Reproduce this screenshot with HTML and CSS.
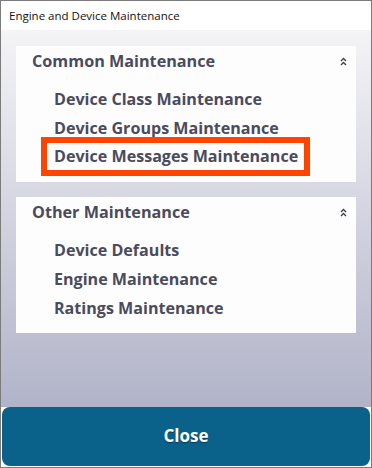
FILE: index.html
```html
<!DOCTYPE html>
<html>
<head>
<meta charset="utf-8">
<link rel="stylesheet" href="styles.css">
</head>
<body>
<div class="window">
  <div class="titlebar">Engine and Device Maintenance</div>
  <div class="content">
    <section class="card">
      <div class="card-head">
        <span class="card-title">Common Maintenance</span>
        <svg class="chev" width="7" height="9" viewBox="0 0 7 9"><polyline points="1,4 3.5,1.5 6,4" fill="none" stroke="#3c3c46" stroke-width="1.3"/><polyline points="1,8 3.5,5.5 6,8" fill="none" stroke="#3c3c46" stroke-width="1.3"/></svg>
      </div>
      <ul class="items">
        <li class="item">Device Class Maintenance</li>
        <li class="item">Device Groups Maintenance</li>
        <li class="item"><span class="hl">Device Messages Maintenance</span></li>
      </ul>
    </section>
    <section class="card">
      <div class="card-head">
        <span class="card-title">Other Maintenance</span>
        <svg class="chev" width="7" height="9" viewBox="0 0 7 9"><polyline points="1,4 3.5,1.5 6,4" fill="none" stroke="#3c3c46" stroke-width="1.3"/><polyline points="1,8 3.5,5.5 6,8" fill="none" stroke="#3c3c46" stroke-width="1.3"/></svg>
      </div>
      <ul class="items">
        <li class="item">Device Defaults</li>
        <li class="item">Engine Maintenance</li>
        <li class="item">Ratings Maintenance</li>
      </ul>
    </section>
  </div>
  <button class="close">Close</button>
</div>
</body>
</html>
```
FILE: styles.css
```css
* { box-sizing: border-box; }
html, body { margin: 0; padding: 0; }
body { width: 372px; height: 468px; background: #ffffff; font-family: "Open Sans", "Noto Sans", sans-serif; }
.window {
  width: 372px; height: 468px;
  border: 1px solid #7b7b7b;
  display: flex; flex-direction: column;
  background: #ffffff;
}
.titlebar {
  height: 29px; flex: none;
  padding-left: 8px;
  font-size: 11.5px; line-height: 29px;
  color: #111111;
  background: #ffffff;
}
.content {
  flex: 1;
  background: linear-gradient(to bottom, #f4f4f7 0%, #b1b3c8 100%);
  padding: 16px 15px 0 15px;
  display: flex; flex-direction: column; gap: 15px;
}
.card {
  height: 136px;
  background: #fdfdfe;
  padding: 0 0 0 16px;
}
.card-head {
  display: flex; align-items: center; justify-content: space-between;
  height: 30px; margin-top: 0;
  padding-right: 9px;
}
.card-title {
  font-size: 16.2px; font-weight: 700; color: #4a4b5c;
}
.chev { display: block; }
.items { list-style: none; margin: 9px 0 0 0; padding: 0 0 0 22px; }
.item {
  height: 29px; line-height: 29px;
  font-size: 16.1px; font-weight: 700; color: #4a4b5c;
}
.hl {
  display: inline-block;
  line-height: 27px; height: 27px;
  padding: 0 6px 0 7px; margin-left: -7px;
  outline: 6px solid #fe4400;
  vertical-align: top; margin-top: 0;
}
.close {
  flex: none;
  height: 59px; margin: 0 1px 1px 1px;
  padding: 0 0 3px 0;
  border: none; border-radius: 8px;
  background: #0a6189;
  color: #ffffff;
  font-family: "Open Sans", "Noto Sans", sans-serif;
  font-size: 17px; font-weight: 700;
  text-shadow: 0 1px 1px rgba(0,0,0,0.4);
}
```
